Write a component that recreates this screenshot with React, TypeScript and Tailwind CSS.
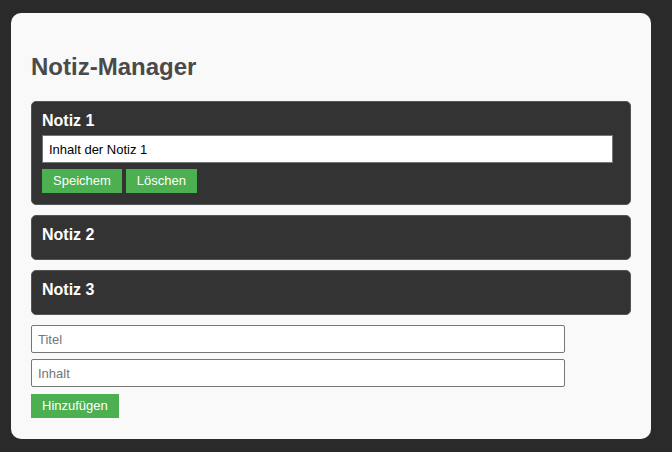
import React from "react";

const notes = [
  { title: "Notiz 1", open: true },
  { title: "Notiz 2", open: false },
  { title: "Notiz 3", open: false },
];

export default function App() {
  return (
    <div className="min-h-screen bg-[#2a2a2a] pt-[13px] pl-[11px] font-['Liberation_Sans',Arial,sans-serif]">
      <div className="w-[640px] rounded-[10px] bg-[#f9f9f9] p-[20px] pb-[21px]">
        <h1 className="my-[20px] text-[24px] leading-[28px] font-bold text-[#4a4a4a]">Notiz-Manager</h1>
        <div className="flex flex-col gap-[10px]">
          {notes.map((n) => (
            <div
              key={n.title}
              className={`rounded-[5px] border border-[#555] bg-[#333] px-[10px] pt-[10px] ${n.open ? "pb-[11px]" : "pb-[10px]"}`}
            >
              <div className="mb-[5px] text-[16px] leading-[18px] font-bold text-white">{n.title}</div>
              {n.open && (
                <>
                  <input
                    readOnly
                    value="Inhalt der Notiz 1"
                    className="block h-[28px] w-[571px] border border-[#767676] bg-white px-[6px] text-[13px] text-black outline-none"
                  />
                  <div className="mt-[6px] flex gap-[4px]">
                    <button className="h-[24px] bg-[#4caf50] px-[11px] text-[13px] text-white">Speichem</button>
                    <button className="h-[24px] bg-[#4caf50] px-[11px] text-[13px] text-white">Löschen</button>
                  </div>
                </>
              )}
            </div>
          ))}
        </div>
        <div className="mt-[10px] flex flex-col gap-[6px]">
          <input
            placeholder="Titel"
            className="block h-[28px] w-[534px] rounded-[2px] border border-[#767676] bg-white px-[6px] text-[13px] text-black outline-none placeholder:text-[#757575]"
          />
          <input
            placeholder="Inhalt"
            className="block h-[28px] w-[534px] rounded-[2px] border border-[#767676] bg-white px-[6px] text-[13px] text-black outline-none placeholder:text-[#757575]"
          />
          <div>
            <button className="h-[24px] bg-[#4caf50] px-[11px] text-[13px] text-white">Hinzufügen</button>
          </div>
        </div>
      </div>
    </div>
  );
}
